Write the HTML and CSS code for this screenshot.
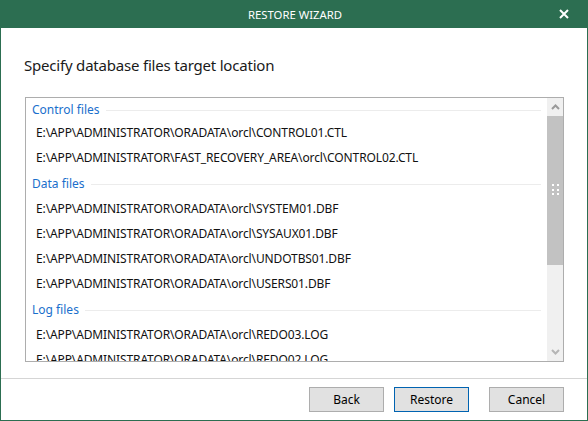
FILE: index.html
```html
<!DOCTYPE html>
<html>
<head>
<meta charset="utf-8">
<link rel="stylesheet" href="styles.css">
</head>
<body>
<div class="window">
  <div class="titlebar">
    <span class="title">RESTORE WIZARD</span>
    <svg class="close" width="10" height="10" viewBox="0 0 10 10"><path d="M1 1 L9 9 M9 1 L1 9" stroke="#fff" stroke-width="2" fill="none"/></svg>
  </div>
  <div class="content">
    <h1 class="heading">Specify database files target location</h1>
    <div class="listbox">
      <div class="rows">
        <div class="group first"><span>Control files</span></div>
        <div class="item">E:\APP\ADMINISTRATOR\ORADATA\orcl\CONTROL01.CTL</div>
        <div class="item">E:\APP\ADMINISTRATOR\FAST_RECOVERY_AREA\orcl\CONTROL02.CTL</div>
        <div class="group"><span>Data files</span></div>
        <div class="item">E:\APP\ADMINISTRATOR\ORADATA\orcl\SYSTEM01.DBF</div>
        <div class="item">E:\APP\ADMINISTRATOR\ORADATA\orcl\SYSAUX01.DBF</div>
        <div class="item">E:\APP\ADMINISTRATOR\ORADATA\orcl\UNDOTBS01.DBF</div>
        <div class="item">E:\APP\ADMINISTRATOR\ORADATA\orcl\USERS01.DBF</div>
        <div class="group"><span>Log files</span></div>
        <div class="item">E:\APP\ADMINISTRATOR\ORADATA\orcl\REDO03.LOG</div>
        <div class="item">E:\APP\ADMINISTRATOR\ORADATA\orcl\REDO02.LOG</div>
      </div>
      <div class="scrollbar">
        <div class="arrow up"><svg width="9" height="6" viewBox="0 0 9 6"><path d="M1 5 L4.5 1.5 L8 5" stroke="#9a9a9a" stroke-width="2" fill="none"/></svg></div>
        <div class="thumb">
          <div class="grip"><i></i><i></i><i></i><i></i><i></i><i></i></div>
        </div>
        <div class="track"></div>
        <div class="arrow down"><svg width="9" height="6" viewBox="0 0 9 6"><path d="M1 1 L4.5 4.5 L8 1" stroke="#b5b5b5" stroke-width="2" fill="none"/></svg></div>
      </div>
    </div>
  </div>
  <div class="footer">
    <button class="btn">Back</button>
    <button class="btn default">Restore</button>
    <button class="btn cancel">Cancel</button>
  </div>
</div>
</body>
</html>
```
FILE: styles.css
```css
html, body {
  margin: 0;
  padding: 0;
  background: #fff;
}
body {
  width: 588px;
  height: 421px;
  overflow: hidden;
  font-family: "Noto Sans", "Liberation Sans", sans-serif;
}
.window {
  box-sizing: border-box;
  width: 588px;
  height: 421px;
  border: 1px solid #2c6e51;
  border-top: none;
  display: flex;
  flex-direction: column;
  background: #fff;
}
.titlebar {
  height: 28px;
  margin: 0 -1px;
  background: #2c6e51;
  display: flex;
  align-items: center;
  justify-content: center;
  position: relative;
}
.title {
  color: #fff;
  font-size: 11.3px;
  margin-left: 2px;
}
.close {
  position: absolute;
  left: 559px;
  top: 9px;
}
.content {
  flex: 1;
  padding: 27px 23px 0 24px;
}
.heading {
  margin: 0 0 0 -1px;
  font-weight: normal;
  font-size: 15px;
  letter-spacing: -0.2px;
  line-height: 20px;
  color: #1a1a1a;
}
.listbox {
  margin-top: 22px;
  height: 265px;
  box-sizing: border-box;
  border: 1px solid #adadad;
  display: flex;
  overflow: hidden;
}
.rows {
  flex: 1;
  overflow: hidden;
}
.group {
  box-sizing: border-box;
  height: 26px;
  display: flex;
  align-items: center;
  padding: 2px 6px 0 6px;
  color: #1a6fcc;
  font-size: 12px;
  line-height: 16px;
}
.group.first {
  height: 22px;
  align-items: flex-end;
  padding: 0 6px 2px 6px;
}
.group::after {
  content: "";
  flex: 1;
  height: 1px;
  background: #ececec;
  margin-left: 6px;
  align-self: center;
}
.group.first::after {
  align-self: auto;
  margin-bottom: 7px;
}
.item {
  height: 25px;
  line-height: 25px;
  padding-left: 10px;
  font-size: 12px;
  letter-spacing: -0.12px;
  color: #111;
  white-space: nowrap;
}
.scrollbar {
  width: 16px;
  background: #f0f0f0;
  display: flex;
  flex-direction: column;
}
.arrow {
  height: 18px;
  display: flex;
  align-items: center;
  justify-content: center;
}
.thumb {
  height: 149px;
  background: #c2c2c2;
  display: flex;
  align-items: center;
  justify-content: center;
}
.grip {
  display: grid;
  grid-template-columns: 2px 2px;
  grid-auto-rows: 2px;
  column-gap: 3px;
  row-gap: 2.5px;
  margin-top: -2px;
}
.grip i {
  background: #fff;
}
.track {
  flex: 1;
}
.footer {
  height: 42px;
  box-sizing: border-box;
  border-top: 1px solid #d5d5d5;
  display: flex;
  justify-content: flex-end;
  align-items: flex-start;
  padding: 8px 23px 0 0;
  gap: 10px;
}
.btn {
  width: 75px;
  height: 25px;
  box-sizing: border-box;
  border: 1px solid #adadad;
  background: #e1e1e1;
  font-family: "Noto Sans", "Liberation Sans", sans-serif;
  font-size: 12px;
  color: #000;
  padding: 0;
}
.btn.default {
  border-color: #0063b1;
}
.btn.cancel {
  margin-left: 10px;
}
```
